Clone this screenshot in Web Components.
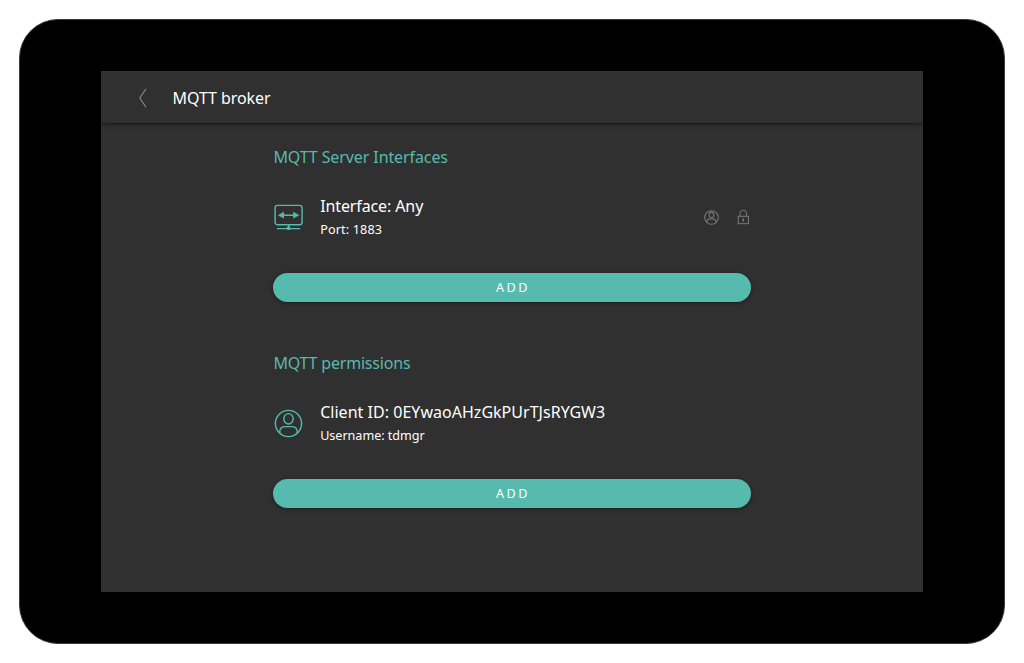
<!DOCTYPE html>
<html lang="en">
<head>
<meta charset="utf-8">
<title>MQTT broker</title>
<style>
html,body{margin:0;background:#fff}
body{font-family:"Noto Sans","Open Sans",sans-serif}
</style>
</head>
<body>
<device-frame>
  <page-header label="MQTT broker" span="98"></page-header>
  <settings-section label="MQTT Server Interfaces" span="174.5">
    <list-entry icon="interface" label="Interface: Any" span="103" detail="Port: 1883" detail-span="62"><status-icons></status-icons></list-entry>
  </settings-section>
  <settings-section label="MQTT permissions" span="137">
    <list-entry icon="user" label="Client ID: 0EYwaoAHzGkPUrTJsRYGW3" span="285" detail="Username: tdmgr" detail-span="104.5"></list-entry>
  </settings-section>
</device-frame>
<script>
const define = (name, html, setup) => customElements.define(name, class extends HTMLElement {
  connectedCallback() {
    if (this.shadowRoot) return;
    const root = this.attachShadow({mode: 'open'});
    root.innerHTML = typeof html === 'function' ? html(this) : html;
    if (setup) setup(this, root);
  }
});
const attr = (el, n) => el.getAttribute(n) || '';
const person = '<circle cx="14.5" cy="14.5" r="13.1"/><ellipse cx="14.5" cy="9.8" rx="4.7" ry="5.2"/><path d="M5.8 24v-1.2c0-3.6 2.4-5.2 5.7-5.2h6c3.3 0 5.7 1.6 5.7 5.2V24"/>';

/* A single line of text, tracked so that it spans a given width. */
define('fit-text', '<style>:host{display:block;white-space:pre;width:max-content}span{display:inline-block}</style><span><slot></slot></span>', (el, root) => {
  const s = root.querySelector('span'), n = el.textContent.length;
  const gap = (parseFloat(attr(el, 'span')) - s.getBoundingClientRect().width) / n;
  s.style.letterSpacing = gap.toFixed(3) + 'px';
});
define('device-frame', `<style>
  :host{display:block;box-sizing:border-box;width:1024px;height:663px;padding:19px}
  .bezel{box-sizing:border-box;width:986px;height:625px;padding:51px 81px;background:#000;border:1px solid #3c3c3c;border-radius:39px}
  .screen{width:822px;height:521px;background:#303030;overflow:hidden;color:#fff}
</style><div class="bezel"><div class="screen"><slot></slot></div></div>`);
define('page-header', el => `<style>
  :host{display:flex;align-items:center;height:52px;background:linear-gradient(#30373c,#303030 2px);box-shadow:0 1px 4px rgba(0,0,0,.6);margin-bottom:20px;font-size:16px}
  svg{margin-left:37px;margin-right:25.5px;margin-top:2px}
  fit-text{line-height:22px;margin-top:2px}
</style><svg width="9" height="20" viewBox="0 0 9 20" fill="none" stroke="#8b8b8b" stroke-width="1.1"><path d="M8 .8 1.8 10 8 19.2"/></svg><fit-text span="${attr(el,'span')}">${attr(el,'label')}</fit-text>`);
define('settings-section', el => `<style>
  :host{display:block;width:478px;margin-left:172.4px;height:206.3px}
  .title{color:#57baae;font-size:16px;line-height:28px}
  .body{height:92px;padding-bottom:10px;display:flex;align-items:center}
  ::slotted(*){flex:1}
</style><div class="title"><fit-text span="${attr(el,'span')}">${attr(el,'label')}</fit-text></div><div class="body"><slot></slot></div><pill-button></pill-button>`);
define('pill-button', `<style>
  :host{display:flex;align-items:center;justify-content:center;height:28.5px;border-radius:15px;background:#57baae;color:#fff;font-size:12.6px;box-shadow:0 1px 4px rgba(0,0,0,.4)}
  fit-text{line-height:28px;margin-left:1px;padding-top:1px}
</style><fit-text span="34">ADD</fit-text>`);
define('list-entry', el => `<style>
  :host{display:flex;align-items:center}
  svg{width:29px;height:29px;margin:0 17.2px 0 .6px;flex:none;fill:none;stroke:#57baae;stroke-width:1.4}
  .text{flex:1}
  .main{font-size:16px;line-height:24px}
  .sub{font-size:12.6px;line-height:23px}
</style><svg viewBox="0 0 29 29">${attr(el,'icon') === 'user' ? person :
  '<rect x="1.1" y="2.4" width="27" height="19.4" rx="2.6"/><path d="M7 12.2h15M3 25.6h23.2M14.6 21.6v4"/><path fill="#57baae" stroke="none" d="M3.8 12.2 10 8.8v6.8zM25.4 12.2 19.2 8.8v6.8z"/><circle cx="14.6" cy="25.2" r="1.9" fill="#57baae" stroke="none"/>'}</svg>
<div class="text"><fit-text class="main" span="${attr(el,'span')}">${attr(el,'label')}</fit-text><fit-text class="sub" span="${attr(el,'detail-span')}">${attr(el,'detail')}</fit-text></div><slot></slot>`);
define('status-icons', `<style>
  :host{display:flex;align-items:center;gap:18px;margin-right:1.4px}
  svg{display:block;fill:none;stroke:#7a7a7a}
</style><svg width="15" height="15" viewBox="0 0 29 29" stroke-width="2">${person}</svg>
<svg width="13" height="16" viewBox="0 0 13 16" stroke-width="1"><rect x="1.2" y="7.3" width="10.2" height="7.4"/><path d="M3 7V4.5a3.3 3.3 0 0 1 6.6 0V7"/><path stroke-width="1.4" d="M6.3 9.5v3"/></svg>`);
</script>
</body>
</html>
